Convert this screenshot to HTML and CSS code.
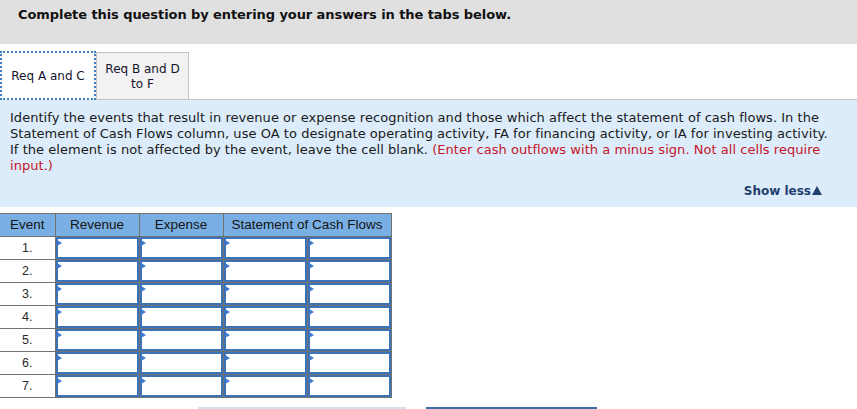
FILE: index.html
```html
<!DOCTYPE html>
<html>
<head>
<meta charset="utf-8">
<link rel="stylesheet" href="styles.css">
</head>
<body>
<div class="top-bar">Complete this question by entering your answers in the tabs below.</div>
<div class="tabs">
  <div class="tab tab-active">Req A and C</div>
  <div class="tab">Req B and D<br>to F</div>
</div>
<div class="panel">
  <p class="instructions">Identify the events that result in revenue or expense recognition and those which affect the statement of cash flows. In the<br>Statement of Cash Flows column, use OA to designate operating activity, FA for financing activity, or IA for investing activity.<br>If the element is not affected by the event, leave the cell blank. <span class="red">(Enter cash outflows with a minus sign. Not all cells require<br>input.)</span></p>
  <div class="show-less">Show less<span class="tri"></span></div>
</div>
<table class="grid">
  <colgroup>
    <col class="c-event"><col class="c-val"><col class="c-val"><col class="c-val"><col class="c-val">
  </colgroup>
  <thead>
    <tr><th>Event</th><th>Revenue</th><th>Expense</th><th colspan="2">Statement of Cash Flows</th></tr>
  </thead>
  <tbody>
    <tr><td class="ev">1.</td><td><div class="inp"></div></td><td><div class="inp"></div></td><td><div class="inp"></div></td><td><div class="inp"></div></td></tr>
    <tr><td class="ev">2.</td><td><div class="inp"></div></td><td><div class="inp"></div></td><td><div class="inp"></div></td><td><div class="inp"></div></td></tr>
    <tr><td class="ev">3.</td><td><div class="inp"></div></td><td><div class="inp"></div></td><td><div class="inp"></div></td><td><div class="inp"></div></td></tr>
    <tr><td class="ev">4.</td><td><div class="inp"></div></td><td><div class="inp"></div></td><td><div class="inp"></div></td><td><div class="inp"></div></td></tr>
    <tr><td class="ev">5.</td><td><div class="inp"></div></td><td><div class="inp"></div></td><td><div class="inp"></div></td><td><div class="inp"></div></td></tr>
    <tr><td class="ev">6.</td><td><div class="inp"></div></td><td><div class="inp"></div></td><td><div class="inp"></div></td><td><div class="inp"></div></td></tr>
    <tr><td class="ev">7.</td><td><div class="inp"></div></td><td><div class="inp"></div></td><td><div class="inp"></div></td><td><div class="inp"></div></td></tr>
  </tbody>
</table>
<div class="nav">
  <div class="nav-btn nav-prev"></div>
  <div class="nav-btn nav-next"></div>
</div>
</body>
</html>
```

FILE: styles.css
```css
html, body {
  margin: 0;
  padding: 0;
  background: #ffffff;
  overflow: hidden;
}
body {
  font-family: "DejaVu Sans", Verdana, sans-serif;
  color: #1a1a1a;
}
.top-bar {
  background: #e0e0e0;
  height: 44px;
  box-sizing: border-box;
  padding: 7px 0 0 18px;
  font-size: 13px;
  line-height: 16px;
  font-weight: bold;
  color: #111;
  letter-spacing: -0.08px;
}
.tabs {
  display: flex;
  align-items: flex-end;
  height: 55px;
  box-sizing: border-box;
  padding-top: 7px;
  position: relative;
  z-index: 2;
}
.tab {
  box-sizing: border-box;
  font-size: 12px;
  line-height: 15px;
  text-align: center;
  display: flex;
  align-items: center;
  justify-content: center;
  color: #14142b;
}
.tab-active {
  width: 96px;
  height: 49px;
  background: #ffffff;
  border: 2px dotted #3f7cc2;
  margin-bottom: -1px;
  padding-top: 1px;
}
.tab:not(.tab-active) {
  width: 93px;
  height: 47px;
  background: #f2f2f2;
  border: 1px solid #c4c4c4;
  border-bottom: none;
  padding-top: 2px;
}
.panel {
  background: #dcecfa;
  border-top: 1px solid #c4c4c4;
  padding: 10px 0 8px 10px;
}
.instructions {
  margin: 0;
  font-size: 13px;
  line-height: 16px;
  color: #1a1a1a;
  white-space: nowrap;
  letter-spacing: 0.04px;
}
.red {
  color: #c4162a;
}
.show-less {
  margin-top: 9px;
  display: flex;
  justify-content: flex-end;
  align-items: center;
  padding-right: 35px;
  font-size: 12px;
  line-height: 16px;
  font-weight: bold;
  color: #233f6e;
}
.tri {
  width: 0;
  height: 0;
  margin-left: 1px;
  border-left: 5px solid transparent;
  border-right: 5px solid transparent;
  border-bottom: 9px solid #233f6e;
  margin-top: -1px;
}
.grid {
  margin-top: 6px;
  border-collapse: collapse;
  table-layout: fixed;
  width: 391px;
  font-family: "Liberation Sans", Arial, sans-serif;
}
.c-event { width: 55px; }
.c-val { width: 84px; }
.grid thead tr { height: 23px; }
.grid th {
  background: #7aafe4;
  border: 1px solid #727272;
  border-left: none;
  padding: 0;
  font-size: 13.5px;
  line-height: 20px;
  font-weight: normal;
  color: #141414;
  text-align: center;
}
.grid tbody tr { height: 23px; }
.grid td {
  border: 1px solid #727272;
  padding: 0;
  line-height: 0;
}
.grid td.ev {
  border-left: none;
  text-align: center;
  font-size: 12.5px;
  line-height: 22px;
  color: #2a2a2a;
}
.inp {
  position: relative;
  height: 18px;
  border: 2px solid #3c72b6;
  background: #ffffff;
}
.inp::before {
  content: "";
  position: absolute;
  left: -1px;
  top: 1px;
  border-left: 5px solid #3c7ad0;
  border-top: 3px solid transparent;
  border-bottom: 3px solid transparent;
}
.nav {
  display: flex;
  gap: 20px;
  padding-left: 198px;
  margin-top: 9px;
}
.nav-btn {
  height: 30px;
  box-sizing: border-box;
}
.nav-prev {
  width: 208px;
  background: #eef4f9;
  border-top: 2px solid #d3e1ed;
}
.nav-next {
  width: 171px;
  background: #3e70ad;
  border-top: 2px solid #3e6ea8;
}
```
